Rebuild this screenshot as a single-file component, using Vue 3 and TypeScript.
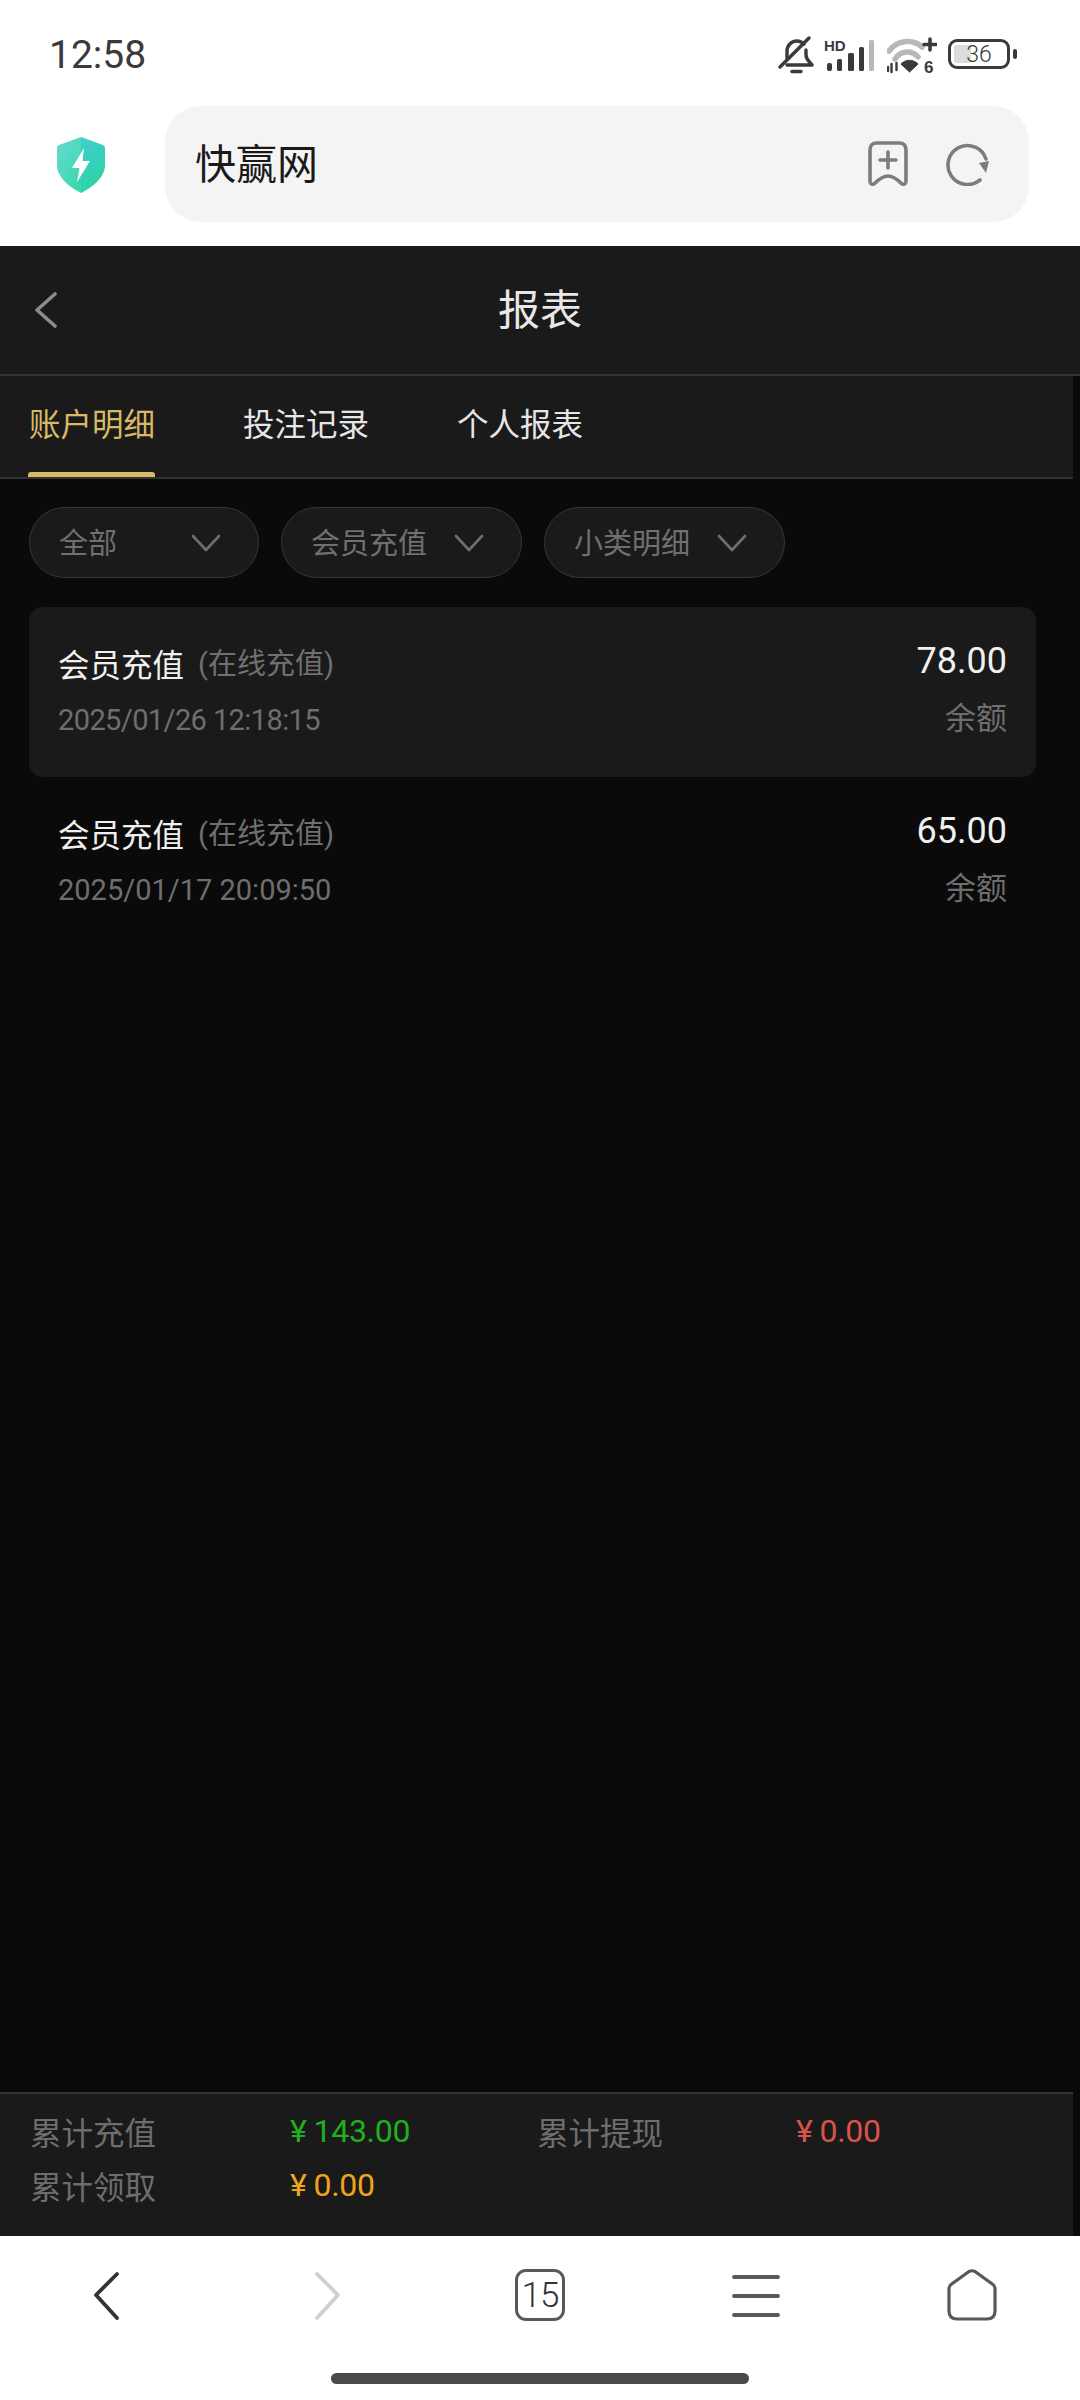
<script setup lang="ts">
import { ref } from 'vue';

interface Row {
  title: string;
  sub: string;
  time: string;
  amount: string;
}

const tabs = ['账户明细', '投注记录', '个人报表'];
const activeTab = ref(0);
const filters = ['全部', '会员充值', '小类明细'];

const rows: Row[] = [
  { title: '会员充值', sub: '(在线充值)', time: '2025/01/26 12:18:15', amount: '78.00' },
  { title: '会员充值', sub: '(在线充值)', time: '2025/01/17 20:09:50', amount: '65.00' },
];

const totals = [
  { label: '累计充值', value: '143.00', tone: 'green' },
  { label: '累计提现', value: '0.00', tone: 'red' },
  { label: '累计领取', value: '0.00', tone: 'orange' },
];
</script>

<template>
  <div class="phone">
    <div class="status-bar">
      <span class="clock">12:58</span>
      <div class="status-icons">
        <svg class="bell" width="36" height="38" viewBox="0 0 36 38" fill="none" stroke="#3a3a3a" stroke-width="3.4" stroke-linecap="round" stroke-linejoin="round">
          <path d="M9 22 V15 C9 9 14 5 19 5 C22 5 24 6 26 8" />
          <path d="M28 14 V19 C28 24 32 26 34 29 H9" />
          <path d="M2 31 L31 2" />
          <path d="M14 35.5 H23" />
        </svg>
        <svg class="signal" width="50" height="35" viewBox="0 -3 50 35">
          <text x="0" y="12" class="hd">HD</text>
          <rect x="3" y="24" width="5" height="8" rx="2" fill="#3a3a3a" />
          <rect x="13" y="20" width="5" height="12" rx="1.5" fill="#3a3a3a" />
          <rect x="24" y="14" width="6" height="18" rx="1.5" fill="#3a3a3a" />
          <rect x="35" y="8" width="5" height="24" rx="1.5" fill="#3a3a3a" />
          <rect x="45" y="1" width="5" height="31" rx="1.5" fill="#b8b8b8" />
        </svg>
        <svg class="wifi" width="50" height="40" viewBox="0 0 50 40" fill="none">
          <path d="M2 14 C11 2 27 2 35 10" stroke="#b8b8b8" stroke-width="5.5" stroke-linecap="round" />
          <path d="M8 22 C14 13 25 13 31 20" stroke="#b8b8b8" stroke-width="5.5" stroke-linecap="round" />
          <path d="M14 27 C19 22 26 22 31 27 L22.5 35 Z" fill="#3a3a3a" stroke="#3a3a3a" stroke-width="1" stroke-linejoin="round" />
          <path d="M43 2 V13 M37 7.5 H49" stroke="#3a3a3a" stroke-width="3.6" stroke-linecap="round" />
          <path d="M1 30 V34 M4.5 27 V35 M9.5 26 V33" stroke="#3a3a3a" stroke-width="2.4" stroke-linecap="round" />
          <text x="37" y="35.5" class="six">6</text>
        </svg>
        <div class="battery">
          <div class="battery-shell">
            <div class="battery-fill"></div>
            <span class="battery-num">36</span>
          </div>
          <div class="battery-nub"></div>
        </div>
      </div>
    </div>

    <div class="browser-bar">
      <svg class="shield" width="48" height="56" viewBox="0 0 48 56">
        <defs>
          <linearGradient id="shieldLeft" x1="0" y1="0" x2="0.6" y2="1">
            <stop offset="0" stop-color="#68d9d3" />
            <stop offset="1" stop-color="#3ed8ae" />
          </linearGradient>
          <linearGradient id="shieldRight" x1="0.2" y1="0" x2="0.4" y2="1">
            <stop offset="0" stop-color="#3fcfcb" />
            <stop offset="1" stop-color="#2cd3a3" />
          </linearGradient>
        </defs>
        <path d="M24 0 L2 8 Q0 9 0 11 V28 C0 40 12 50 24 56 Z" fill="url(#shieldLeft)" />
        <path d="M24 0 L46 8 Q48 9 48 11 V28 C48 40 36 50 24 56 Z" fill="url(#shieldRight)" />
        <path d="M27 11 L15 31 H22.5 L20 45 L33 24 H25.5 Z" fill="#fff" />
      </svg>
      <div class="url-box">
        <span class="url-text">快赢网</span>
        <svg class="bookmark" width="40" height="46" viewBox="0 0 40 46" fill="none" stroke="#7d7d7d" stroke-width="3.6" stroke-linecap="round" stroke-linejoin="round">
          <path d="M2 9 Q2 2 9 2 H31 Q38 2 38 9 V40 Q38 44 34 43 Q26 35 20 35 Q14 35 6 43 Q2 44 2 40 Z" />
          <path d="M20 11 V27 M12 19 H28" />
        </svg>
        <svg class="refresh" width="44" height="44" viewBox="0 0 44 44" fill="none">
          <path d="M34 38 A19.5 19.5 0 1 1 40 17" stroke="#7d7d7d" stroke-width="3.6" stroke-linecap="round" />
          <path d="M33 21 L43 19 L40 31 Z" fill="#7d7d7d" />
        </svg>
      </div>
    </div>

    <div class="page">
      <header class="title-bar">
        <svg class="title-back" width="24" height="36" viewBox="0 0 24 36" fill="none" stroke="#8c8c8c" stroke-width="3.6" stroke-linecap="round" stroke-linejoin="round">
          <path d="M21 2 L3 18 L21 34" />
        </svg>
        <h1 class="title">报表</h1>
      </header>

      <nav class="tabs">
        <div
          v-for="(tab, i) in tabs"
          :key="tab"
          class="tab"
          :class="{ active: activeTab === i }"
          @click="activeTab = i"
        >
          {{ tab }}
        </div>
      </nav>

      <div class="filters">
        <div v-for="f in filters" :key="f" class="chip">
          <span>{{ f }}</span>
          <svg width="30" height="18" viewBox="0 0 30 18" fill="none" stroke="#6e6e6e" stroke-width="2.6" stroke-linecap="round" stroke-linejoin="round">
            <path d="M2 2 L15 16 L28 2" />
          </svg>
        </div>
      </div>

      <div class="records">
        <div v-for="(row, i) in rows" :key="row.time" class="record" :class="{ striped: i === 0 }">
          <div class="record-left">
            <div class="record-head">
              <span class="record-title">{{ row.title }}</span>
              <span class="record-sub">{{ row.sub }}</span>
            </div>
            <div class="record-time">{{ row.time }}</div>
          </div>
          <div class="record-right">
            <div class="record-amount">{{ row.amount }}</div>
            <div class="record-note">余额</div>
          </div>
        </div>
      </div>

      <div class="summary">
        <template v-for="t in totals" :key="t.label">
          <span class="sum-label">{{ t.label }}</span>
          <span class="sum-value" :class="t.tone"><i>¥</i>{{ t.value }}</span>
        </template>
      </div>
    </div>

    <footer class="bottom-nav">
      <div class="nav-icons">
        <svg width="50" height="52" viewBox="0 0 50 52" fill="none" stroke="#333" stroke-width="3.8" stroke-linecap="round" stroke-linejoin="round">
          <path d="M34 5 L13 26 L34 49" />
        </svg>
        <svg width="50" height="52" viewBox="0 0 50 52" fill="none" stroke="#d0d0d0" stroke-width="3.8" stroke-linecap="round" stroke-linejoin="round">
          <path d="M18 5 L39 26 L18 49" />
        </svg>
        <div class="tab-count">15</div>
        <svg width="50" height="52" viewBox="0 0 50 52" fill="none" stroke="#595959" stroke-width="3.8" stroke-linecap="round">
          <path d="M3 8 H47 M3 27 H47 M3 46 H47" />
        </svg>
        <svg width="50" height="52" viewBox="0 0 50 52" fill="none" stroke="#595959" stroke-width="3.2" stroke-linejoin="round">
          <path d="M2 20 Q2 17 4 15.5 L22 2.5 Q25 1 28 2.5 L46 15.5 Q48 17 48 20 V42 Q48 50 40 50 H10 Q2 50 2 42 Z" />
        </svg>
      </div>
      <div class="home-bar"></div>
    </footer>
  </div>
</template>

<style scoped>
.phone {
  width: 1080px;
  height: 2400px;
  display: flex;
  flex-direction: column;
  background: #fff;
  font-family: Roboto, "Noto Sans CJK SC", sans-serif;
  overflow: hidden;
}

.status-bar {
  height: 106px;
  display: flex;
  align-items: flex-start;
  justify-content: space-between;
  padding: 33px 63px 0 49px;
  box-sizing: border-box;
}

.clock {
  font-size: 39px;
  line-height: 44px;
  color: #3a3a3a;
}

.status-icons {
  display: flex;
  align-items: flex-start;
  padding-top: 3px;
}

.bell {
  margin-right: 10px;
}

.signal {
  margin-right: 13px;
}

.hd {
  font: 700 15px "Liberation Sans", sans-serif;
  fill: #3a3a3a;
}

.six {
  font: 700 17px "Liberation Sans", sans-serif;
  fill: #3a3a3a;
}

.wifi {
  margin-top: 1px;
  margin-right: 11px;
}

.battery {
  display: flex;
  align-items: center;
  margin-top: 3px;
}

.battery-shell {
  width: 62px;
  height: 30px;
  border: 3.5px solid #3a3a3a;
  border-radius: 9px;
  box-sizing: border-box;
  display: flex;
  align-items: center;
  justify-content: center;
  position: relative;
}

.battery-fill {
  position: absolute;
  left: 3px;
  top: 3px;
  bottom: 3px;
  width: 17px;
  background: #dcdcdc;
  border-radius: 2px;
}

.battery-num {
  position: relative;
  font-size: 23px;
  font-weight: 300;
  line-height: 23px;
  color: #3a3a3a;
}

.battery-nub {
  width: 4px;
  height: 10px;
  margin-left: 3px;
  background: #3a3a3a;
  border-radius: 2px;
}

.browser-bar {
  height: 140px;
  display: flex;
  align-items: flex-start;
  padding-left: 57px;
  box-sizing: border-box;
}

.shield {
  margin-top: 31px;
  flex: none;
}

.url-box {
  margin-left: 60px;
  width: 864px;
  height: 116px;
  background: #f4f4f4;
  border-radius: 36px;
  display: flex;
  align-items: center;
  padding-left: 30px;
  box-sizing: border-box;
}

.url-text {
  font-size: 41px;
  color: #1a1a1a;
  flex: 1;
  padding-bottom: 7px;
}

.bookmark {
  margin-right: 38px;
  margin-top: -1px;
}

.refresh {
  margin-right: 39px;
  margin-top: -1px;
}

.page {
  flex: 1;
  min-height: 0;
  display: flex;
  flex-direction: column;
  background: #0a0a0a;
}

.title-bar {
  height: 130px;
  flex: none;
  position: relative;
  display: flex;
  align-items: center;
  justify-content: center;
  background: #1a1a1a;
  border-bottom: 2px solid #333;
  box-sizing: border-box;
}

.title-back {
  position: absolute;
  left: 34px;
  top: 46px;
}

.title {
  margin: 0 0 7px;
  font-size: 42px;
  font-weight: 400;
  color: #e8e8e8;
}

.tabs {
  width: 1073px;
  height: 103px;
  flex: none;
  display: flex;
  gap: 88px;
  padding-left: 29px;
  box-sizing: border-box;
  background: #1a1a1a;
  border-bottom: 2px solid #333;
}

.tab {
  position: relative;
  font-size: 31.5px;
  line-height: 100px;
  color: #e6e6e6;
}

.tab.active {
  color: #d8b965;
}

.tab.active::after {
  content: '';
  position: absolute;
  left: -1px;
  right: 0;
  bottom: 0;
  height: 5px;
  border-radius: 3px 3px 0 0;
  background: #d8b965;
}

.filters {
  display: flex;
  gap: 22px;
  padding: 28px 29px 0;
}

.chip {
  height: 71px;
  display: flex;
  align-items: center;
  justify-content: space-between;
  gap: 27px;
  padding: 0 37px 0 29px;
  border: 1.5px solid #363636;
  border-radius: 36px;
  background: #1a1a1a;
  box-sizing: border-box;
  font-size: 29px;
  color: #707070;
}

.chip span {
  padding-bottom: 4px;
}

.chip:first-child {
  width: 230px;
}

.records {
  flex: 1;
  padding: 29px 29px 0;
  width: 1065px;
  box-sizing: border-box;
  min-height: 0;
}

.record {
  height: 169px;
  display: flex;
  justify-content: space-between;
  padding: 34px 29px 0;
  box-sizing: border-box;
  border-radius: 14px;
}

.record.striped {
  background: #1a1a1a;
  height: 170px;
}

.record-head {
  display: flex;
  align-items: flex-start;
  height: 50px;
  padding-top: 1px;
}

.record-title {
  font-size: 31.5px;
  line-height: 50px;
  color: #f0f0f0;
}

.record-sub {
  margin-left: 14px;
  font-size: 29px;
  line-height: 44px;
  color: #707070;
}

.record-time {
  margin-top: 8px;
  font-size: 29px;
  line-height: 40px;
  color: #6e6e6e;
}

.striped .record-time {
  letter-spacing: -0.6px;
}

.record-right {
  text-align: right;
}

.record-amount {
  font-size: 36px;
  line-height: 40px;
  color: #f0f0f0;
}

.record-note {
  margin-top: 16px;
  font-size: 31px;
  line-height: 44px;
  color: #6e6e6e;
}

.summary {
  width: 1073px;
  height: 144px;
  flex: none;
  display: grid;
  grid-template-columns: 260px 247px 259px 1fr;
  grid-auto-rows: 54px;
  align-items: center;
  padding: 10px 0 0 30px;
  box-sizing: border-box;
  background: #1a1a1a;
  border-top: 2px solid #333;
}

.sum-label {
  font-size: 31.5px;
  color: #6e6e6e;
}

.sum-value {
  font-size: 32px;
  letter-spacing: -0.3px;
}

.sum-value i {
  font-style: normal;
  margin-right: 7px;
}

.green {
  color: #1fb01f;
}

.red {
  color: #d9534a;
}

.orange {
  color: #eda51f;
}

.bottom-nav {
  height: 164px;
  flex: none;
  background: #fff;
  display: flex;
  flex-direction: column;
  align-items: center;
  padding-top: 33px;
  box-sizing: border-box;
}

.nav-icons {
  width: 1080px;
  display: grid;
  grid-template-columns: repeat(5, 216px);
  justify-items: center;
  height: 52px;
}

.tab-count {
  width: 50px;
  height: 52px;
  border: 3.4px solid #595959;
  border-radius: 11px;
  box-sizing: border-box;
  display: flex;
  align-items: center;
  justify-content: center;
  font-size: 35px;
  font-weight: 300;
  letter-spacing: -1px;
  color: #333;
}

.home-bar {
  margin-top: 52px;
  width: 418px;
  height: 11px;
  border-radius: 6px;
  background: #4a4a4a;
}
</style>
